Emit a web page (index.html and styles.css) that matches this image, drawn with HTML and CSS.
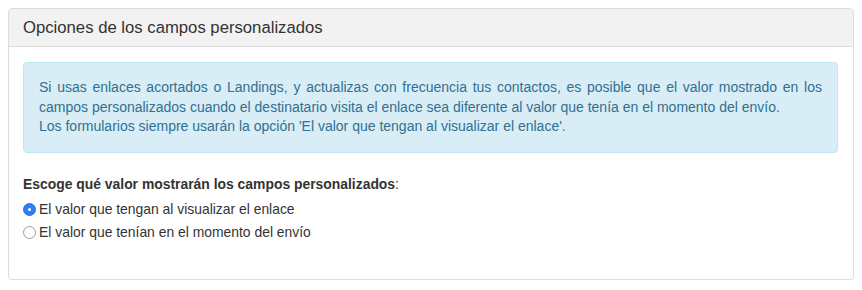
FILE: index.html
```html
<!DOCTYPE html>
<html lang="es">
<head>
<meta charset="utf-8">
<title>Opciones de los campos personalizados</title>
<link rel="stylesheet" href="styles.css">
</head>
<body>
<div class="panel">
  <div class="panel-heading">
    <h3 class="panel-title">Opciones de los campos personalizados</h3>
  </div>
  <div class="panel-body">
    <div class="alert">
      <p class="just">Si usas enlaces acortados o Landings, y actualizas con frecuencia tus contactos, es posible que el valor mostrado en los campos personalizados cuando el destinatario visita el enlace sea diferente al valor que tenía en el momento del envío.</p>
      <p>Los formularios siempre usarán la opción 'El valor que tengan al visualizar el enlace'.</p>
    </div>
    <div class="form-group">
      <div class="group-label"><b>Escoge qué valor mostrarán los campos personalizados</b>:</div>
      <label class="radio"><input type="radio" name="valor" checked><span class="dot"></span>El valor que tengan al visualizar el enlace</label>
      <label class="radio"><input type="radio" name="valor"><span class="dot"></span>El valor que tenían en el momento del envío</label>
    </div>
  </div>
</div>
</body>
</html>
```

FILE: styles.css
```css
html, body {
  margin: 0;
  padding: 0;
  background: #ffffff;
}
body {
  margin: 8px;
  font-family: "Liberation Sans", Arial, Helvetica, sans-serif;
  font-size: 13.9px;
  color: #333333;
}
.panel {
  border: 1px solid #dddddd;
  border-radius: 4px;
  background: #ffffff;
  box-shadow: 0 1px 1px rgba(0, 0, 0, 0.05);
  height: 272px;
  box-sizing: border-box;
}
.panel-heading {
  background: #f2f2f2;
  border-bottom: 1px solid #dddddd;
  border-radius: 3px 3px 0 0;
  padding: 10px 14px 9px;
}
.panel-title {
  margin: 0;
  font-size: 16.7px;
  font-weight: normal;
  line-height: 18px;
  color: #333333;
}
.panel-body {
  padding: 15px 15px 15px 14px;
}
.alert {
  background: #d9edf7;
  border: 1px solid #bce8f1;
  border-radius: 4px;
  color: #31708f;
  font-size: 14px;
  padding: 15px 15px 15px 15px;
  line-height: 19.5px;
  margin-bottom: 22px;
}
.alert p {
  margin: 0;
}
.alert .just {
  text-align: justify;
}
.form-group {
  display: flex;
  flex-direction: column;
}
.group-label {
  line-height: 19px;
  margin-bottom: 6px;
}
.radio {
  display: flex;
  align-items: center;
  line-height: 19px;
  margin-bottom: 4px;
  cursor: pointer;
}
.radio input {
  display: none;
}
.dot {
  width: 13px;
  height: 13px;
  box-sizing: border-box;
  border-radius: 50%;
  border: 1px solid #9a9a9a;
  background: #ffffff;
  margin: 0 3px 0 0;
  position: relative;
  flex: none;
}
.radio input:checked + .dot {
  background: #2f7ff0;
  border-color: #2a73dc;
}
.radio input:checked + .dot::after {
  content: "";
  position: absolute;
  left: 4px;
  top: 4px;
  width: 3px;
  height: 3px;
  border-radius: 50%;
  background: #ffffff;
}
```
